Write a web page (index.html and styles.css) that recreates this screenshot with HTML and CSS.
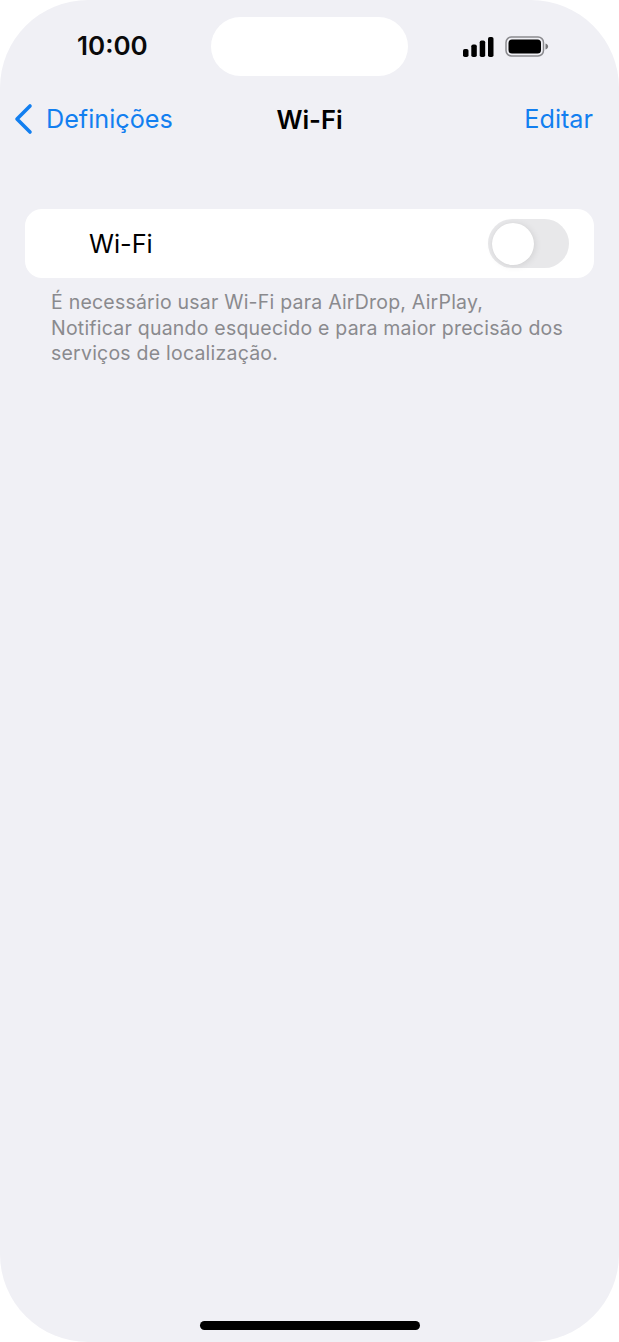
FILE: index.html
```html
<!DOCTYPE html>
<html lang="pt">
<head>
<meta charset="utf-8">
<title>Wi-Fi</title>
<link rel="stylesheet" href="styles.css">
</head>
<body>
<div class="phone">
  <div class="status">
    <span class="time">10:00</span>
    <div class="island"></div>
    <div class="status-icons">
      <svg class="signal" width="31" height="20" viewBox="0 0 31 20"><rect x="0" y="12" width="5.500" height="8" rx="1.800"/><rect x="8.300" y="7.500" width="5.500" height="12.500" rx="1.800"/><rect x="16.700" y="3.500" width="5.500" height="16.500" rx="1.800"/><rect x="25" y="0" width="5.500" height="20" rx="1.800"/></svg>
      <svg class="battery" width="44" height="21" viewBox="0 0 44 21"><rect x="1" y="1" width="37.500" height="19" rx="5.500" fill="none" stroke="#8a8a8e" stroke-width="1.500"/><rect x="3.500" y="3.500" width="32.500" height="14" rx="3.500" fill="#000"/><path d="M40.500 7.500c1.700.5 2.600 1.700 2.600 3s-.9 2.500-2.600 3z" fill="#77777a"/></svg>
    </div>
  </div>
  <nav class="nav">
    <a class="back">
      <svg width="20" height="32" viewBox="0 0 20 32"><path d="M17 3 4 16l13 13" fill="none" stroke="#127ff0" stroke-width="3.600" stroke-linecap="round" stroke-linejoin="round"/></svg>
      <span>Definições</span>
    </a>
    <h1 class="title">Wi-Fi</h1>
    <a class="edit">Editar</a>
  </nav>
  <section class="card">
    <span class="label">Wi-Fi</span>
    <div class="switch"><div class="knob"></div></div>
  </section>
  <p class="note">É necessário usar Wi-Fi para AirDrop, AirPlay,<br>Notificar quando esquecido e para maior precisão dos<br>serviços de localização.</p>
  <div class="spacer"></div>
  <div class="home"></div>
</div>
</body>
</html>
```
FILE: styles.css
```css
html, body {
  margin: 0;
  padding: 0;
  background: #fff;
}
body {
  width: 619px;
  height: 1342px;
  overflow: hidden;
  font-family: Inter, "Liberation Sans", sans-serif;
}
.phone {
  width: 619px;
  height: 1342px;
  box-sizing: border-box;
  background: #f0f0f5;
  border-radius: 88px;
  display: flex;
  flex-direction: column;
}
.status {
  height: 76px;
  padding-top: 17px;
  box-sizing: border-box;
  display: flex;
  align-items: flex-start;
}
.time {
  margin-left: 77px;
  width: 134px;
  height: 59px;
  line-height: 58px;
  font-size: 26px;
  font-weight: 600;
  color: #0a0a0a;
}
.island {
  width: 197px;
  height: 59px;
  background: #fff;
  border-radius: 30px;
}
.status-icons {
  display: flex;
  align-items: center;
  height: 59px;
  margin-left: 55px;
  gap: 11px;
}
.signal { fill: #000; }
.nav {
  height: 86px;
  display: flex;
  align-items: center;
  justify-content: space-between;
  position: relative;
  padding: 0 26px 0 13px;
}
.back {
  display: flex;
  align-items: center;
  gap: 13px;
  font-size: 25.200px;
  color: #127ff0;
}
.title {
  position: absolute;
  left: 0;
  right: 0;
  margin: 0;
  text-align: center;
  font-size: 25.500px;
  font-weight: 600;
  color: #000;
  pointer-events: none;
}
.edit {
  font-size: 25.200px;
  color: #127ff0;
}
.card {
  margin: 47px 25px 0;
  height: 69px;
  background: #fff;
  border-radius: 17px;
  display: flex;
  align-items: center;
  justify-content: space-between;
  padding: 0 25px 0 64px;
}
.label {
  font-size: 25.300px;
  color: #000;
}
.switch {
  width: 81px;
  height: 49px;
  box-sizing: border-box;
  background: #e8e8ea;
  border-radius: 25px;
  padding: 4px;
}
.knob {
  width: 42px;
  height: 42px;
  background: #fff;
  border-radius: 50%;
  box-shadow: 1px 1px 7px rgba(0, 0, 0, 0.1), 0 0 1px rgba(0, 0, 0, 0.06);
}
.note {
  margin: 12px 25px 0 51px;
  font-size: 19.500px;
  line-height: 25.500px;
  letter-spacing: 0.22px;
  white-space: nowrap;
  color: #8a8a8e;
}
.spacer { flex: 1; }
.home {
  width: 220px;
  height: 9px;
  margin: 0 auto 12px;
  background: #000;
  border-radius: 5px;
}
```
